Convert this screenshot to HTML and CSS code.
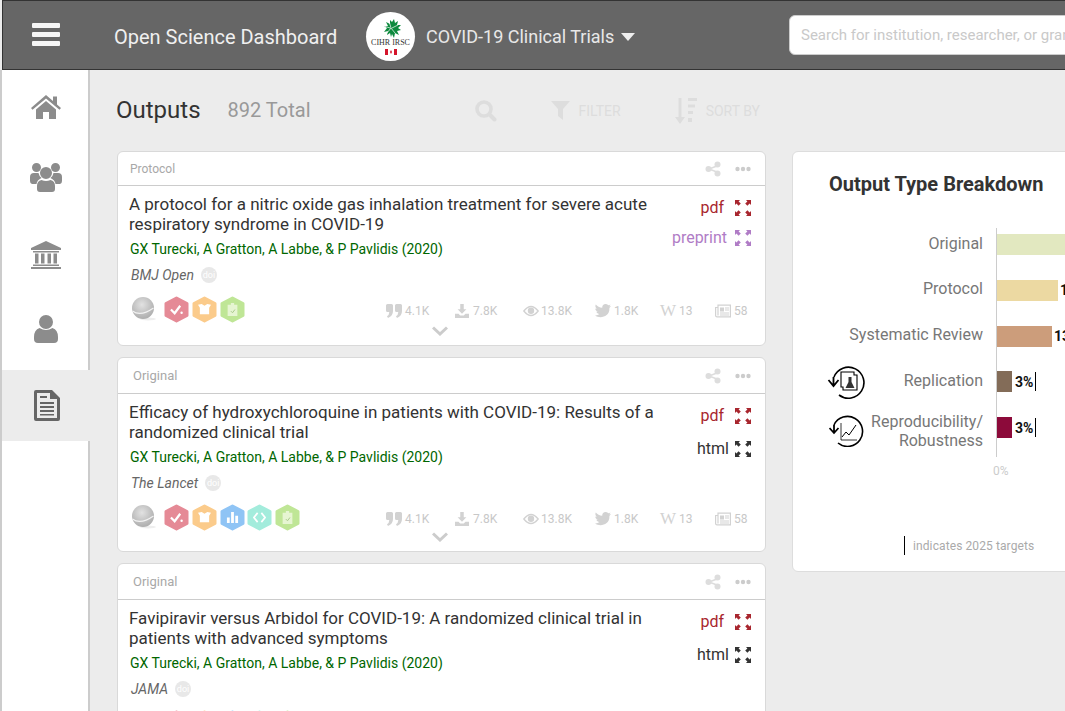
FILE: index.html
```html
<!DOCTYPE html>
<html lang="en">
  <head>
    <meta charset="UTF-8" />
    <meta name="viewport" content="width=device-width, initial-scale=1.0" />
    <title>Open Science Dashboard</title>
    <link rel="stylesheet" href="styles.css">
  </head>
  <body>
    <svg class="defs" width="0" height="0">
      <defs>
        <radialGradient id="ball" cx="45%" cy="35%" r="70%">
          <stop offset="0" stop-color="#e2e2e2" />
          <stop offset="1" stop-color="#a9a9a9" />
        </radialGradient>
        <symbol id="i-share" viewBox="0 0 16 16">
          <path d="M12 5L4 8l8 3" fill="none" stroke="currentColor" stroke-width="1.6" />
          <circle cx="12.5" cy="3.5" r="3" fill="currentColor" />
          <circle cx="3.5" cy="8" r="3" fill="currentColor" />
          <circle cx="12.5" cy="12.5" r="3" fill="currentColor" />
        </symbol>
        <symbol id="i-dots" viewBox="0 0 16 6">
          <circle cx="2.5" cy="3" r="2.2" fill="currentColor" />
          <circle cx="8" cy="3" r="2.2" fill="currentColor" />
          <circle cx="13.5" cy="3" r="2.2" fill="currentColor" />
        </symbol>
        <symbol id="i-expand" viewBox="0 0 16 16">
          <path fill="currentColor" d="M0 0h5L3.600 1.400 5.800 3.600 3.600 5.800 1.400 3.600 0 5zM16 0v5l-1.400-1.400-2.200 2.200-2.200-2.200 2.200-2.200L11 0zM0 16v-5l1.400 1.400 2.200-2.200 2.200 2.200-2.200 2.200L5 16zM16 16h-5l1.400-1.400-2.200-2.200 2.200-2.200 2.200 2.200L16 11z" />
        </symbol>
        <symbol id="i-quote" viewBox="0 0 16 14">
          <path fill="currentColor" d="M0 1.500Q0 0 1.500 0h4Q7 0 7 1.500V7q0 5-5 7l-1-1.800Q3.200 11 3.300 8H1.500Q0 8 0 6.500zM9 1.500Q9 0 10.500 0h4Q16 0 16 1.500V7q0 5-5 7l-1-1.800q2.200-1.200 2.300-4.200h-1.800Q9 8 9 6.500z" />
        </symbol>
        <symbol id="i-download" viewBox="0 0 16 16">
          <path fill="currentColor" d="M6 0h4v6h3l-5 5-5-5h3zM0 11h4l2 2h4l2-2h4v5H0z" />
        </symbol>
        <symbol id="i-eye" viewBox="0 0 16 11">
          <path fill="none" stroke="currentColor" stroke-width="1.300" d="M.8 5.500Q8-3.500 15.200 5.500 8 14.500.8 5.500z" />
          <circle cx="8" cy="5.200" r="3.200" fill="currentColor" />
        </symbol>
        <symbol id="i-bird" viewBox="0 0 16 14">
          <path fill="currentColor" d="M16 1.700q-.9.500-1.900.6 1-.6 1.400-1.800-1 .6-2.100.8C12.500.5 11.500 0 10.500 0 8.300 0 6.900 2 7.300 3.800 4.600 3.700 2.300 2.400.8.500c-.8 1.400-.4 3.300 1 4.300q-.8 0-1.500-.4c0 1.600 1.100 2.900 2.600 3.300q-.7.200-1.500.1c.4 1.300 1.600 2.200 3.100 2.300C3 11.200 1.500 11.700 0 11.500 5 15 15 13 14.400 4q.9-.8 1.600-2.300z" />
        </symbol>
        <symbol id="i-news" viewBox="0 0 16 13">
          <path fill="none" stroke="currentColor" stroke-width="1.200" d="M3 .6h12.400v11.800H2Q.6 12.400.6 11V3H3zM3 3v8" />
          <path fill="currentColor" d="M5 3h4v4H5zM10 3h4v1h-4zM10 5h4v1h-4zM5 8h9v1H5zM5 10h9v1H5z" />
        </symbol>
        <symbol id="i-chevron" viewBox="0 0 16 10">
          <path fill="none" stroke="currentColor" stroke-width="3" d="M1 1.500l7 6.500 7-6.500" />
        </symbol>
        <symbol id="hex" viewBox="0 0 25 27">
          <path fill="currentColor" stroke="currentColor" stroke-width="3" stroke-linejoin="round" d="M12.500 2L23 7.500v12L12.500 25 2 19.500v-12z" />
        </symbol>
      </defs>
    </svg>

    <header class="topbar">
      <div class="hamburger"><span></span><span></span><span></span></div>
      <div class="brand">Open Science Dashboard</div>
      <div class="logo">
        <svg class="logo-leaf" viewBox="0 0 20 20" width="20" height="20">
          <path fill="#0d8a3e" d="M10 0l1 4 2-3 1 4 3-2-1 4 4 0-3 3 3 2-4 1 2 4-4-2-1 5-2-4-1 3-1-4-3 2 1-4-4 1 3-4-3-2 4 0-2-4 4 2 0-4 2 2z" />
          <path stroke="#fff" stroke-width=".7" fill="none" d="M3 8l6 2M17 7l-6 3M8 3l2 7M6 15l4-5 4 5" />
        </svg>
        <span class="logo-text">CIHR IRSC</span>
        <svg class="logo-flag" viewBox="0 0 12 6" width="12" height="6">
          <path fill="#d5152c" d="M0 0h3v6H0zM9 0h3v6H9zM6 1l1 2-1 2-1-2z" />
        </svg>
      </div>
      <div class="project">COVID-19 Clinical Trials</div>
      <div class="caret"></div>
      <input class="search" type="text" placeholder="Search for institution, researcher, or grant" />
    </header>

    <div class="layout">
      <nav class="sidebar">
        <div class="nav-item nav-home">
          <svg viewBox="0 0 30 24" width="30" height="24"><path fill="#8c8c8c" d="M15 0l7 6V1.500h4v8l4 3.500-1.500 1.800L15 3.500 1.500 14.800 0 13zM5 14.500L15 6l10 8.500V24h-7v-7h-6v7H5z" /></svg>
        </div>
        <div class="nav-item nav-people">
          <svg viewBox="0 0 32 30" width="32" height="30"><path fill="#8c8c8c" d="M6.500 1a4.500 4.500 0 1 1 0 9 4.500 4.500 0 0 1 0-9zM25.500 1a4.500 4.500 0 1 1 0 9 4.500 4.500 0 0 1 0-9zM16 5a6 6 0 1 1 0 12 6 6 0 0 1 0-12zM4 11h4.500q.5 3 3 5-4.500 2-5 6H2q-2-.5-2-3v-4q0-4 4-4zM28 11h-4.500q-.5 3-3 5 4.500 2 5 6H30q2-.5 2-3v-4q0-4-4-4zM11.500 18q4.500 2 9 0 4.500 1 4.500 6v3q0 3-3 3H10q-3 0-3-3v-3q0-5 4.500-6z" /></svg>
        </div>
        <div class="nav-item nav-bank">
          <svg viewBox="0 0 30 28" width="30" height="28"><path fill="#8c8c8c" d="M15 0l15 7v2H0V7zM2 10h26v1.500H2zM4 12.500h3.500v10H4zM10 12.500h3.500v10H10zM16.500 12.500H20v10h-3.500zM22.500 12.500H26v10h-3.500zM2 23.500h26V25H2zM0 26h30v2H0z" /></svg>
        </div>
        <div class="nav-item nav-user">
          <svg viewBox="0 0 24 28" width="24" height="28"><path fill="#8c8c8c" d="M12 0a7 7 0 1 1 0 14 7 7 0 0 1 0-14zM5.500 13q6.500 4 13 0 5.500 2 5.500 9v2q0 4-4 4H4q-4 0-4-4v-2q0-7 5.500-9z" /></svg>
        </div>
        <div class="nav-item nav-active">
          <svg viewBox="0 0 26 31" width="26" height="31"><path fill="#666" fill-rule="evenodd" d="M2 0h16l8 8v21q0 2-2 2H2q-2 0-2-2V2q0-2 2-2zM3 3v25h20V9h-7V3zM6 6h7v2H6zM6 12h14v2H6zM6 16h14v2H6zM6 20h14v2H6zM6 24h14v1.500H6z" /></svg>
        </div>
      </nav>

      <main class="content">
        <div class="toolbar">
          <h1 class="page-title">Outputs</h1>
          <span class="total">892 Total</span>
          <svg class="tool-search" viewBox="0 0 22 22" width="22" height="22"><circle cx="9" cy="9" r="7" fill="none" stroke="#ddd" stroke-width="3.600" /><path stroke="#ddd" stroke-width="4" stroke-linecap="round" d="M14.500 14.500l5 5" /></svg>
          <svg class="tool-filter" viewBox="0 0 19 19" width="19" height="19"><path fill="#ddd" d="M0 0h19l-7 8v11l-5-4V8z" /></svg>
          <span class="tool-label">FILTER</span>
          <svg class="tool-sort" viewBox="0 0 22 26" width="22" height="26"><path fill="#ddd" d="M3.500 0h3v19H10l-5 7-5-7h3.500zM13 0h9v3h-9zM13 6.500h7v3h-7zM13 13h5v3h-5zM13 20h4v4h-4z" /></svg>
          <span class="tool-label">SORT BY</span>
        </div>

        <div class="columns">
          <section class="cards">
            <article class="card">
              <div class="card-head card-head-small">
                <span>Protocol</span>
                <svg class="head-share"><use href="#i-share" /></svg>
                <svg class="head-dots"><use href="#i-dots" /></svg>
              </div>
              <div class="card-body">
                <div class="card-main">
                  <h2 class="card-title">A protocol for a nitric oxide gas inhalation treatment for severe acute respiratory syndrome in COVID-19</h2>
                  <div class="authors">GX Turecki, A Gratton, A Labbe, &amp; P Pavlidis (2020)</div>
                  <div class="journal"><i>BMJ Open</i><span class="doi">doi</span></div>
                </div>
                <div class="links">
                  <a class="link link-pdf">pdf <svg><use href="#i-expand" /></svg></a>
                  <a class="link link-preprint">preprint <svg><use href="#i-expand" /></svg></a>
                </div>
              </div>
              <div class="card-foot">
                <div class="badges">
                  <svg class="ball" viewBox="0 0 25 26"><ellipse cx="17" cy="23" rx="8" ry="1.500" fill="#eee" /><circle cx="12" cy="12" r="11" fill="url(#ball)" /><path d="M1.500 15q8 6 21-3" fill="none" stroke="#f2f2f2" stroke-width="1.200" /></svg>
                  <span class="badge badge-red"><svg class="hex"><use href="#hex" /></svg><svg class="glyph" viewBox="0 0 14 12"><path d="M1 6l4 4 6-8" fill="none" stroke="#fff" stroke-width="2.400" /><circle cx="12.500" cy="9.500" r="1.300" fill="#fff" /></svg></span>
                  <span class="badge badge-orange"><svg class="hex"><use href="#hex" /></svg><svg class="glyph" viewBox="0 0 14 12"><path fill="#fff" d="M0 1l4-1 3 2 3-2 4 1-2 3v7H2V4zM4 5q3 2 6 0v1.500H4z" /></svg></span>
                  <span class="badge badge-green"><svg class="hex"><use href="#hex" /></svg><svg class="glyph" viewBox="0 0 14 16"><path fill="#e6f5d2" d="M1 2h4V0h4v2h4v14H1z" /><path d="M5 10l2 2 3-4" fill="none" stroke="#a9c88a" stroke-width="1.200" /></svg></span>
                </div>
                <div class="stats">
                  <span class="stat stat-cite"><svg><use href="#i-quote" /></svg>4.1K</span>
                  <span class="stat stat-down"><svg><use href="#i-download" /></svg>7.8K</span>
                  <span class="stat stat-view"><svg><use href="#i-eye" /></svg>13.8K</span>
                  <span class="stat stat-tw"><svg><use href="#i-bird" /></svg>1.8K</span>
                  <span class="stat stat-wiki"><b>W</b>13</span>
                  <span class="stat stat-news"><svg><use href="#i-news" /></svg>58</span>
                </div>
              </div>
              <svg class="chevron"><use href="#i-chevron" /></svg>
            </article>

            <article class="card">
              <div class="card-head">
                <span>Original</span>
                <svg class="head-share"><use href="#i-share" /></svg>
                <svg class="head-dots"><use href="#i-dots" /></svg>
              </div>
              <div class="card-body">
                <div class="card-main">
                  <h2 class="card-title">Efficacy of hydroxychloroquine in patients with COVID-19: Results of a randomized clinical trial</h2>
                  <div class="authors">GX Turecki, A Gratton, A Labbe, &amp; P Pavlidis (2020)</div>
                  <div class="journal"><i>The Lancet</i><span class="doi">doi</span></div>
                </div>
                <div class="links">
                  <a class="link link-pdf">pdf <svg><use href="#i-expand" /></svg></a>
                  <a class="link link-html">html <svg><use href="#i-expand" /></svg></a>
                </div>
              </div>
              <div class="card-foot">
                <div class="badges">
                  <svg class="ball" viewBox="0 0 25 26"><ellipse cx="17" cy="23" rx="8" ry="1.500" fill="#eee" /><circle cx="12" cy="12" r="11" fill="url(#ball)" /><path d="M1.500 15q8 6 21-3" fill="none" stroke="#f2f2f2" stroke-width="1.200" /></svg>
                  <span class="badge badge-red"><svg class="hex"><use href="#hex" /></svg><svg class="glyph" viewBox="0 0 14 12"><path d="M1 6l4 4 6-8" fill="none" stroke="#fff" stroke-width="2.400" /><circle cx="12.500" cy="9.500" r="1.300" fill="#fff" /></svg></span>
                  <span class="badge badge-orange"><svg class="hex"><use href="#hex" /></svg><svg class="glyph" viewBox="0 0 14 12"><path fill="#fff" d="M0 1l4-1 3 2 3-2 4 1-2 3v7H2V4zM4 5q3 2 6 0v1.500H4z" /></svg></span>
                  <span class="badge badge-blue"><svg class="hex"><use href="#hex" /></svg><svg class="glyph" viewBox="0 0 14 12"><path fill="#fff" d="M1 6h3v6H1zM5.500 0h3v12h-3zM10 4h3v8h-3z" /></svg></span>
                  <span class="badge badge-teal"><svg class="hex"><use href="#hex" /></svg><svg class="glyph" viewBox="0 0 14 12"><path d="M5 1L1 6l4 5M9 1l4 5-4 5" fill="none" stroke="#fff" stroke-width="1.800" /></svg></span>
                  <span class="badge badge-green"><svg class="hex"><use href="#hex" /></svg><svg class="glyph" viewBox="0 0 14 16"><path fill="#e6f5d2" d="M1 2h4V0h4v2h4v14H1z" /><path d="M5 10l2 2 3-4" fill="none" stroke="#a9c88a" stroke-width="1.200" /></svg></span>
                </div>
                <div class="stats">
                  <span class="stat stat-cite"><svg><use href="#i-quote" /></svg>4.1K</span>
                  <span class="stat stat-down"><svg><use href="#i-download" /></svg>7.8K</span>
                  <span class="stat stat-view"><svg><use href="#i-eye" /></svg>13.8K</span>
                  <span class="stat stat-tw"><svg><use href="#i-bird" /></svg>1.8K</span>
                  <span class="stat stat-wiki"><b>W</b>13</span>
                  <span class="stat stat-news"><svg><use href="#i-news" /></svg>58</span>
                </div>
              </div>
              <svg class="chevron"><use href="#i-chevron" /></svg>
            </article>

            <article class="card">
              <div class="card-head">
                <span>Original</span>
                <svg class="head-share"><use href="#i-share" /></svg>
                <svg class="head-dots"><use href="#i-dots" /></svg>
              </div>
              <div class="card-body">
                <div class="card-main">
                  <h2 class="card-title">Favipiravir versus Arbidol for COVID-19: A randomized clinical trial in patients with advanced symptoms</h2>
                  <div class="authors">GX Turecki, A Gratton, A Labbe, &amp; P Pavlidis (2020)</div>
                  <div class="journal"><i>JAMA</i><span class="doi">doi</span></div>
                </div>
                <div class="links">
                  <a class="link link-pdf">pdf <svg><use href="#i-expand" /></svg></a>
                  <a class="link link-html">html <svg><use href="#i-expand" /></svg></a>
                </div>
              </div>
              <div class="card-foot">
                <div class="badges">
                  <svg class="ball" viewBox="0 0 25 26"><circle cx="12" cy="12" r="11" fill="url(#ball)" /></svg>
                  <span class="badge badge-red"><svg class="hex"><use href="#hex" /></svg></span>
                  <span class="badge badge-orange"><svg class="hex"><use href="#hex" /></svg></span>
                  <span class="badge badge-blue"><svg class="hex"><use href="#hex" /></svg></span>
                  <span class="badge badge-teal"><svg class="hex"><use href="#hex" /></svg></span>
                  <span class="badge badge-green"><svg class="hex"><use href="#hex" /></svg></span>
                </div>
              </div>
            </article>
          </section>

          <aside class="panel">
            <h3 class="panel-title">Output Type Breakdown</h3>
            <div class="chart">
              <div class="row">
                <div class="row-label">Original</div>
                <div class="bar bar-original"></div>
              </div>
              <div class="row">
                <div class="row-label">Protocol</div>
                <div class="bar bar-protocol"></div>
                <span class="bar-value">15%</span>
              </div>
              <div class="row">
                <div class="row-label">Systematic Review</div>
                <div class="bar bar-review"></div>
                <span class="bar-value">13%</span>
              </div>
              <div class="row">
                <svg class="cycle" viewBox="0 0 40 34" width="40" height="34">
                  <path d="M7 11A15.500 15.500 0 1 1 12 29" fill="none" stroke="#000" stroke-width="1.600" />
                  <path d="M1.500 14l5 6 5-6M6.500 11v8" fill="none" stroke="#000" stroke-width="1.800" />
                  <path d="M14 6h13v3h3v15H16V21h-2z" fill="#fff" stroke="#000" stroke-width="1.100" />
                  <path d="M21.500 11h3v5l3 6h-9l3-6z" fill="#333" />
                </svg>
                <div class="row-label">Replication</div>
                <div class="bar bar-replication"></div>
                <span class="bar-value bar-value-low">3%</span>
                <span class="target"></span>
              </div>
              <div class="row">
                <svg class="cycle cycle-low" viewBox="0 0 36 32" width="36" height="32">
                  <path d="M5 10A15 15 0 1 1 9 28" fill="none" stroke="#000" stroke-width="1.600" />
                  <path d="M.5 13l4.500 5 4.500-5M5 10v7" fill="none" stroke="#000" stroke-width="1.800" />
                  <path d="M12 8v17h16" fill="none" stroke="#000" stroke-width=".8" />
                  <path d="M13 22l4-5 3 3 7-10" fill="none" stroke="#000" stroke-width="1" />
                </svg>
                <div class="row-label row-label-two">Reproducibility/<br />Robustness</div>
                <div class="bar bar-repro"></div>
                <span class="bar-value bar-value-low">3%</span>
                <span class="target"></span>
              </div>
            </div>
            <div class="axis-zero">0%</div>
            <div class="legend"><span class="legend-tick"></span>indicates 2025 targets</div>
          </aside>
        </div>
      </main>
    </div>
  </body>
</html>
```

FILE: styles.css
```css
html,
body {
  margin: 0;
  height: 711px;
  width: 1065px;
  overflow: hidden;
}
body {
  background-color: #ececec;
  font-family: Roboto, "Liberation Sans", sans-serif;
  color: #333;
  padding-left: 2px;
  box-sizing: border-box;
}
.defs {
  display: block;
  height: 0;
}

/* top bar */
.topbar {
  display: flex;
  align-items: center;
  height: 70px;
  width: 1100px;
  box-sizing: border-box;
  background-color: #666;
  border-top: 1px solid #333;
  border-bottom: 1px solid #333;
  border-left: 1px solid #333;
  white-space: nowrap;
}
.topbar > * {
  flex: none;
}
.hamburger {
  display: flex;
  flex-direction: column;
  gap: 4px;
  width: 28px;
  margin-left: 29px;
  margin-top: -2px;
}
.hamburger span {
  display: block;
  height: 5px;
  border-radius: 1px;
  background-color: #f6f6f6;
}
.brand {
  width: 223px;
  margin-left: 54px;
  margin-top: 3px;
  font-size: 20px;
  color: #f0f0f0;
}
.logo {
  display: flex;
  flex-direction: column;
  align-items: center;
  justify-content: center;
  width: 49px;
  height: 49px;
  margin-left: 29px;
  margin-top: 3px;
  border-radius: 50%;
  background-color: #fff;
}
.logo-leaf {
  display: block;
}
.logo-text {
  font-family: "Liberation Serif", serif;
  font-size: 8px;
  line-height: 9px;
  color: #333;
  white-space: nowrap;
}
.logo-flag {
  display: block;
  margin-top: 2px;
}
.project {
  width: 185px;
  margin-left: 11px;
  margin-top: 3px;
  font-size: 18px;
  color: #e8e8e8;
}
.caret {
  width: 0;
  height: 0;
  margin-left: 10px;
  margin-top: 3px;
  border-left: 7.5px solid transparent;
  border-right: 7.5px solid transparent;
  border-top: 8px solid #eee;
}
.search {
  width: 320px;
  height: 40px;
  margin-left: 154px;
  margin-top: -1px;
  padding: 0 11px 0 11px;
  border: 1px solid #ccc;
  border-radius: 6px;
  box-sizing: border-box;
  font-family: Roboto, "Liberation Sans", sans-serif;
  font-size: 15px;
  background-color: #fff;
}
.search::placeholder {
  color: #c9c9c9;
  opacity: 1;
}

.layout {
  display: flex;
  height: 641px;
}

/* left nav */
.sidebar {
  flex: none;
  width: 88px;
  box-sizing: border-box;
  background-color: #fff;
  border-right: 2px solid #ccc;
  position: relative;
}
.sidebar::before {
  content: "";
  position: absolute;
  left: -2px;
  top: 0;
  bottom: 0;
  width: 2px;
  background-color: #ccc;
}
.nav-item {
  display: flex;
  align-items: center;
  justify-content: center;
  padding-left: 1px;
}
.nav-item svg {
  display: block;
}
.nav-home {
  height: 73px;
}
.nav-people {
  height: 67px;
}
.nav-bank {
  height: 90px;
}
.nav-user {
  height: 57px;
}
.nav-active {
  width: 88px;
  height: 71px;
  margin-top: 13px;
  padding-left: 2px;
  box-sizing: border-box;
  background-color: #ececec;
}

/* main */
.content {
  flex: 1;
  padding: 0 0 0 27px;
  min-width: 0;
}
.toolbar {
  display: flex;
  align-items: center;
  height: 81px;
  margin-left: -1px;
}
.page-title {
  margin: 0 0 1px;
  font-size: 24px;
  font-weight: 400;
  color: #333;
}
.total {
  margin: 0 0 1px 27px;
  font-size: 20px;
  color: #999;
}
.tool-search {
  margin-left: 164px;
}
.tool-filter {
  margin-left: 54px;
}
.tool-sort {
  margin-left: 54px;
}
.tool-label {
  margin-left: 9px;
  font-size: 14px;
  color: #ddd;
}
.columns {
  display: flex;
  align-items: flex-start;
  gap: 26px;
}

/* output cards */
.cards {
  flex: none;
  width: 649px;
  display: flex;
  flex-direction: column;
  gap: 11px;
}
.card {
  position: relative;
  background-color: #fff;
  border: 1px solid #d9d9d9;
  border-radius: 6px;
  height: 195px;
  box-sizing: border-box;
  flex: none;
}
.card-head {
  display: flex;
  align-items: center;
  height: 35px;
  padding: 0 14px 0 15px;
  border-bottom: 1px solid #ccc;
  font-size: 13px;
  color: #a8a8a8;
}
.card-head-small {
  height: 33px;
  padding-left: 12px;
  font-size: 12px;
}
.head-share {
  width: 16px;
  height: 16px;
  margin-left: auto;
  color: #ddd;
}
.head-dots {
  width: 16px;
  height: 6px;
  margin-left: 14px;
  color: #ccc;
}
.card-body {
  display: flex;
  padding: 8px 14px 0 11px;
}
.card-main {
  flex: 1;
  min-width: 0;
}
.card-title {
  margin: 0;
  width: 535px;
  font-size: 17px;
  font-weight: 400;
  line-height: 20px;
  color: #333;
}
.authors {
  margin-top: 6px;
  padding-left: 1px;
  font-size: 14px;
  line-height: 18px;
  color: #060;
}
.journal {
  display: flex;
  align-items: center;
  margin-top: 8px;
  padding-left: 2px;
  font-size: 14px;
  line-height: 18px;
  color: #666;
}
.doi {
  display: flex;
  align-items: center;
  justify-content: center;
  width: 16px;
  height: 16px;
  margin-left: 7px;
  border-radius: 50%;
  background-color: #e8e8e8;
  color: #fff;
  font-size: 9px;
}
.links {
  display: flex;
  flex-direction: column;
  align-items: flex-end;
  gap: 10px;
  padding-top: 4px;
}
.link {
  display: flex;
  align-items: center;
  font-size: 16px;
  line-height: 20px;
}
.link svg {
  width: 16px;
  height: 16px;
  margin-left: 11px;
}
.link-pdf {
  color: #a8262e;
}
.link-preprint {
  color: #b07cc6;
}
.link-preprint svg {
  margin-left: 8px;
}
.link-html {
  margin-top: 3px;
  color: #333;
}
.link-html svg {
  margin-left: 6px;
}
.card-foot {
  display: flex;
  align-items: center;
  height: 28px;
  margin-top: 11px;
  padding-left: 13px;
}
.badges {
  display: flex;
  align-items: center;
  width: 200px;
}
.ball {
  display: block;
  width: 25px;
  height: 26px;
  margin-right: 8px;
}
.badge {
  position: relative;
  flex: none;
  width: 25px;
  height: 27px;
  margin-right: 2.75px;
}
.hex {
  display: block;
  width: 25px;
  height: 27px;
}
.glyph {
  position: absolute;
  left: 6px;
  top: 7px;
  width: 13px;
  height: 13px;
}
.badge-red {
  color: #e58a96;
}
.badge-orange {
  color: #fbcb8b;
}
.badge-blue {
  color: #8fc4f5;
}
.badge-teal {
  color: #a3ecdc;
}
.badge-green {
  color: #bfe696;
}
.stats {
  display: flex;
  align-items: center;
  margin-left: 55px;
  margin-top: 4px;
  font-size: 12px;
  color: #c8c8c8;
}
.stat {
  display: flex;
  align-items: center;
  flex: none;
}
.stat svg {
  width: 16px;
  height: 14px;
  margin-right: 3px;
  color: #d2d2d2;
}
.stat b {
  width: 17px;
  margin-right: 2px;
  font-family: "Liberation Serif", serif;
  font-size: 17px;
  font-weight: 400;
  line-height: 14px;
  color: #d2d2d2;
}
.stat-cite {
  width: 68px;
}
.stat-down {
  width: 69px;
}
.stat-view {
  width: 72px;
}
.stat-view svg {
  margin-right: 2px;
}
.stat-tw {
  width: 65px;
}
.stat-wiki {
  width: 55px;
}
.chevron {
  position: absolute;
  left: 314px;
  bottom: 9px;
  width: 16px;
  height: 10px;
  color: #ccc;
}

/* right panel */
.panel {
  flex: none;
  position: relative;
  width: 300px;
  height: 421px;
  box-sizing: border-box;
  background-color: #fff;
  border: 1px solid #ddd;
  border-radius: 6px;
}
.panel-title {
  margin: 21px 0 0 36px;
  font-size: 20px;
  line-height: 22px;
  font-weight: 700;
  color: #333;
}
.chart {
  display: flex;
  flex-direction: column;
  margin: 33px 0 0 203px;
  padding: 6px 0 19px;
  border-left: 1px solid #ccc;
  gap: 24.75px;
}
.row {
  position: relative;
  display: flex;
  align-items: center;
  height: 21px;
}
.row-label {
  position: absolute;
  right: 100%;
  width: 170px;
  margin-right: 14px;
  margin-top: -3px;
  text-align: right;
  font-size: 16px;
  line-height: 19px;
  color: #777;
}
.row-label-two {
  margin-top: 6px;
}
.bar {
  height: 21px;
  flex: none;
}
.bar-original {
  width: 120px;
  background-color: #e2e8c0;
}
.bar-protocol {
  width: 61px;
  background-color: #ecd9a2;
}
.bar-review {
  width: 55px;
  background-color: #cc9d7b;
}
.bar-replication {
  width: 15px;
  background-color: #836c58;
}
.bar-repro {
  width: 15px;
  background-color: #8c0a3a;
}
.bar-value {
  margin-left: 2px;
  font-size: 14px;
  font-weight: 700;
  color: #111;
}
.bar-value-low {
  margin-left: 3px;
}
.target {
  width: 1px;
  height: 19px;
  margin-left: 2px;
  background-color: #000;
}
.cycle {
  position: absolute;
  left: -170px;
  top: -5px;
}
.cycle-low {
  left: -168px;
  top: -2px;
}
.axis-zero {
  margin: 7px 0 0 200px;
  font-size: 12px;
  color: #ccc;
}
.legend {
  position: absolute;
  left: 111px;
  top: 384px;
  display: flex;
  align-items: center;
  font-size: 12px;
  letter-spacing: .1px;
  color: #aaa;
}
.legend-tick {
  width: 1px;
  height: 19px;
  margin-right: 8px;
  background-color: #000;
}
```
